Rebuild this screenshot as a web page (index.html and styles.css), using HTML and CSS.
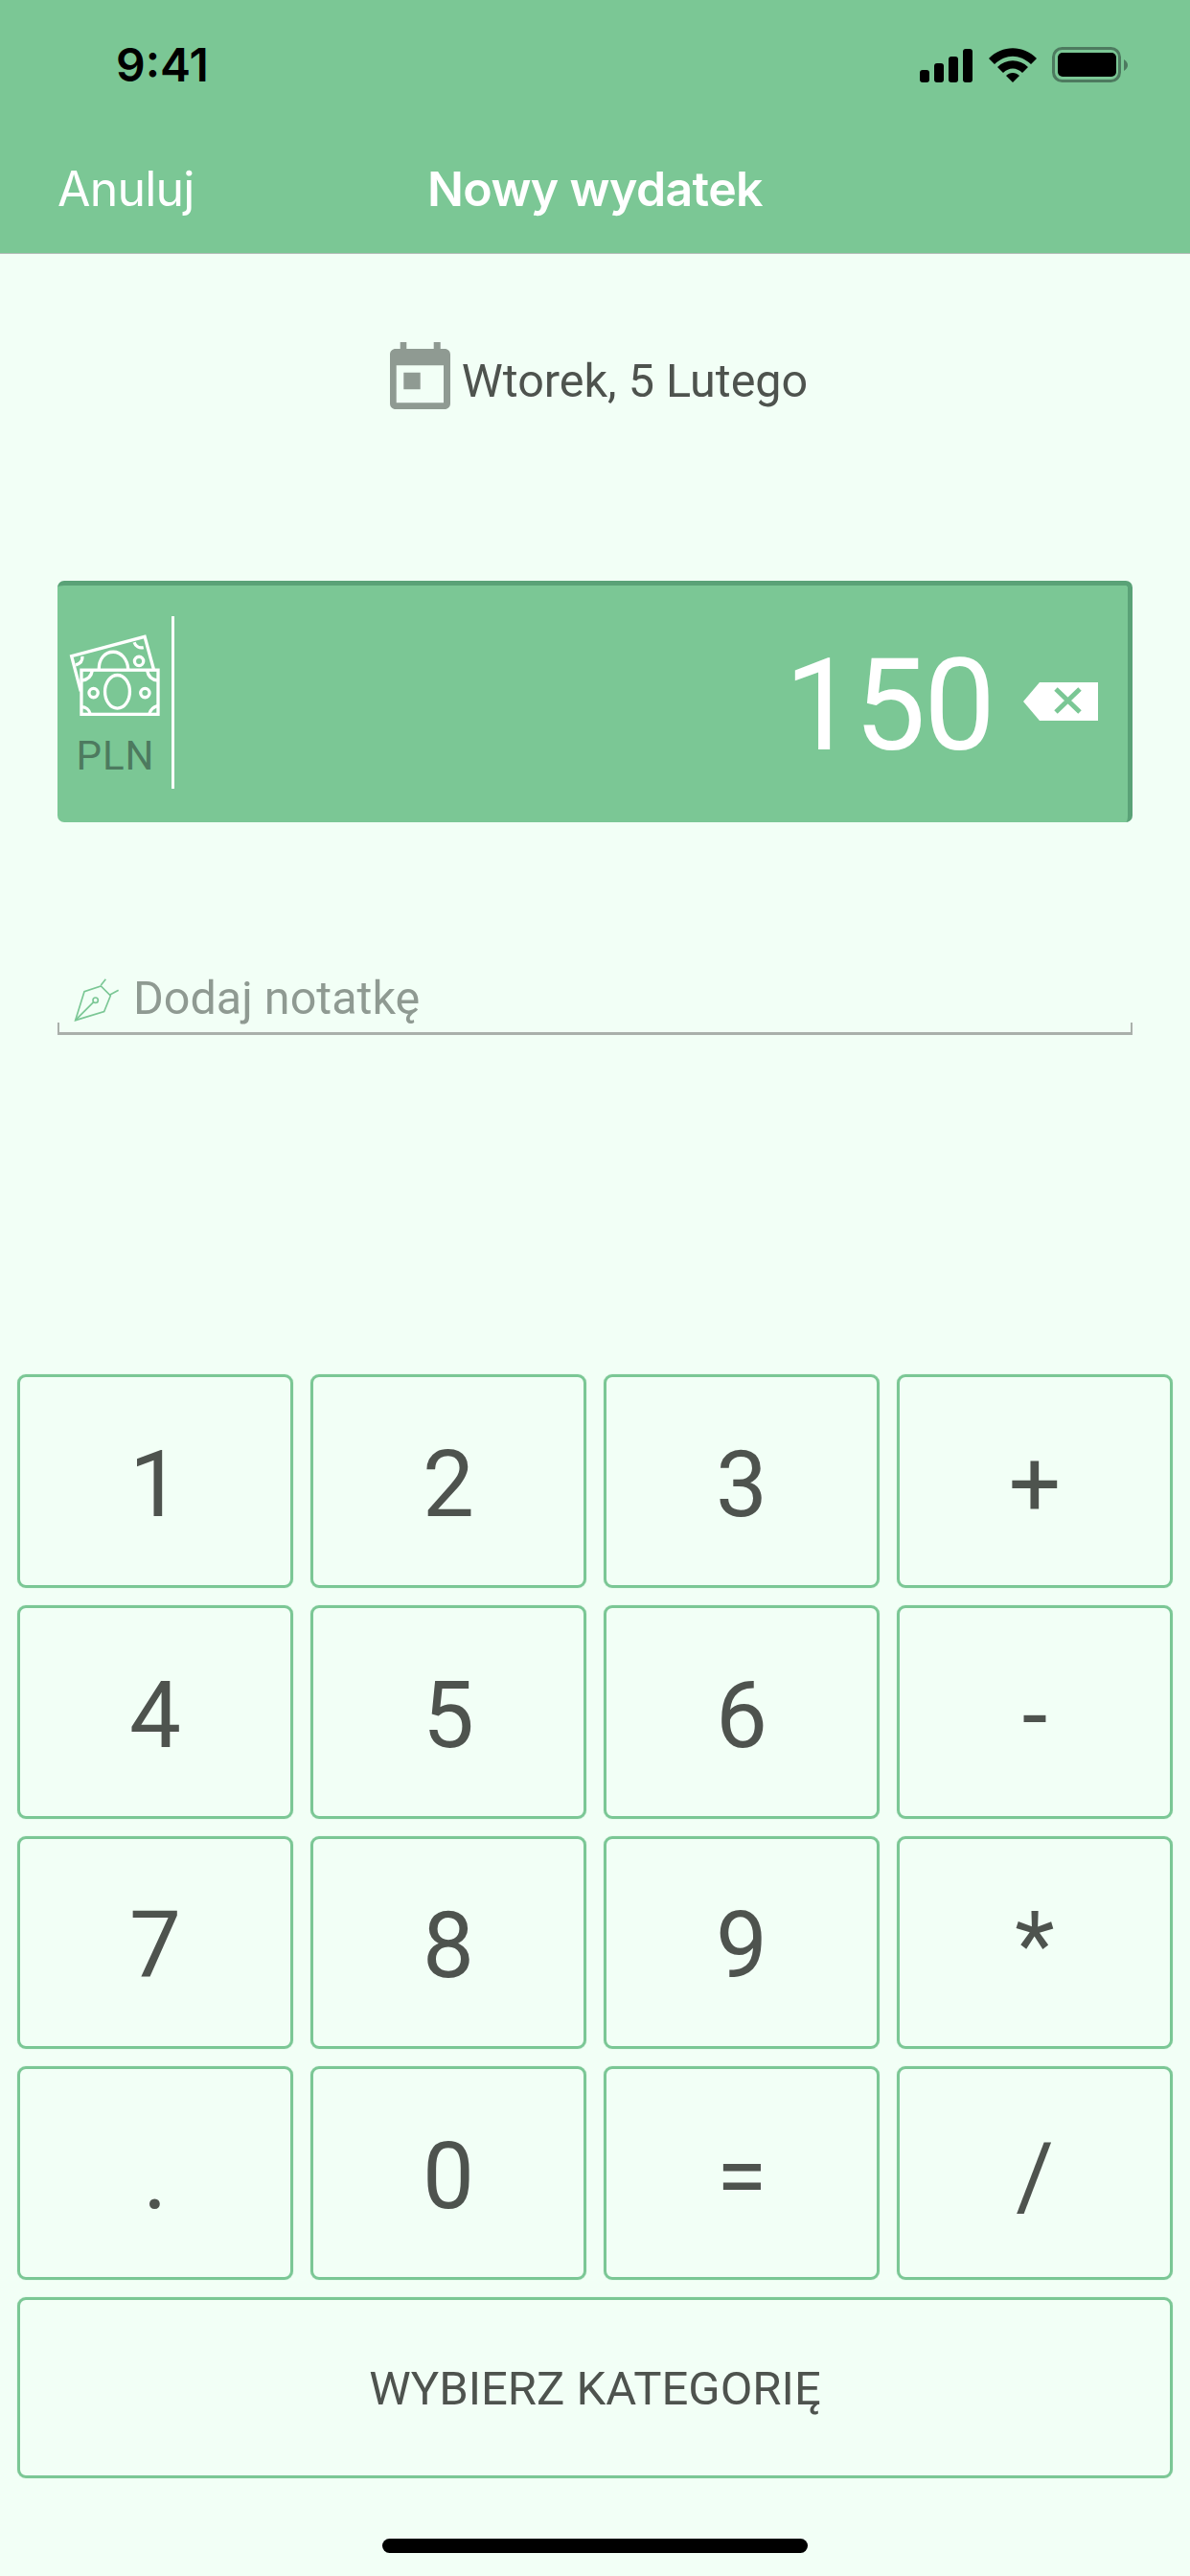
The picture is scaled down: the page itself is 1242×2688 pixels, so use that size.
FILE: index.html
```html
<!DOCTYPE html>
<html lang="pl">
<head>
<meta charset="utf-8">
<title>Nowy wydatek</title>
<link rel="stylesheet" href="styles.css">
</head>
<body>
<div class="app">
  <header class="header">
    <div class="status">
      <span class="clock">9:41</span>
      <div class="status-icons">
        <svg class="signal" width="55" height="35" viewBox="0 0 55 35"><rect x="0" y="22" width="10" height="13" rx="3"/><rect x="15" y="15" width="10" height="20" rx="3"/><rect x="30" y="8" width="10" height="27" rx="3"/><rect x="45" y="0" width="10" height="35" rx="3"/></svg>
        <svg class="wifi" width="50" height="36" viewBox="0 0 50 36"><path d="M0 11C14-3.500 36-3.500 50 11L44 17C32 6 18 6 6 17Z"/><path d="M9 20C18 11 32 11 41 20L35 26C29 20 21 20 15 26Z"/><path d="M18 29C22 25 28 25 32 29L25 36Z"/></svg>
        <svg class="battery" width="79" height="37" viewBox="0 0 79 37"><rect class="battery-shell" x="1.500" y="1.500" width="69" height="34" rx="9"/><rect x="6" y="6" width="61" height="25" rx="5"/><path class="battery-cap" d="M75 13C78 15 79 17 79 19C79 21 78 23 75 25Z"/></svg>
      </div>
    </div>
    <nav class="nav">
      <span class="nav-cancel">Anuluj</span>
      <span class="nav-title">Nowy wydatek</span>
      <span></span>
    </nav>
  </header>

  <main class="main">
    <div class="date">
      <svg class="calendar" width="63" height="70" viewBox="0 0 63 70"><path fill-rule="evenodd" d="M10.700 0H17.300V7H45.700V0H52.700V7H57C60.500 7 63 9.500 63 13V64C63 67.500 60.500 70 57 70H6C2.500 70 0 67.500 0 64V13C0 9.500 2.500 7 6 7H10.700ZM6.700 24.300V63.300H56V24.300ZM14.300 31.700H31.700V49.300H14.300Z"/></svg>
      <span class="date-text">Wtorek, 5 Lutego</span>
    </div>

    <section class="amount">
      <div class="currency">
        <svg class="money" width="98" height="88" viewBox="60 210 295 265">
          <path d="M100 392L71 281L301 220L329 322"/>
          <path d="M157 323C157 290 175 268 202 268C228 268 247 292 249 323"/>
          <circle cx="283" cy="297" r="14"/>
          <path d="M105 282C106 296 98 305 84 309"/>
          <path d="M268 238C272 250 284 257 297 254"/>
          <rect x="102" y="325" width="241" height="139"/>
          <ellipse cx="215" cy="393" rx="39" ry="52"/>
          <circle cx="140" cy="397" r="14"/>
          <circle cx="302" cy="397" r="14"/>
          <path d="M102 358C122 356 133 345 136 327"/>
          <path d="M309 327C312 345 325 356 343 358"/>
          <path d="M102 441C116 441 127 450 130 464"/>
          <path d="M315 464C318 450 328 441 343 437"/>
        </svg>
        <span class="currency-code">PLN</span>
      </div>
      <div class="divider"></div>
      <span class="amount-value">150</span>
      <svg class="backspace" width="78" height="40" viewBox="0 0 78 40"><path class="backspace-body" d="M17 0H78V40H17L0 20Z"/><path class="backspace-x" d="M34 7L59 31M59 7L34 31"/></svg>
    </section>

    <div class="note">
      <div class="note-row">
        <svg class="pen" width="48" height="48" viewBox="75 110 144 144"><path d="M80 247L108 157L160 140L190 170L170 220Z"/><path d="M80 247L137 190"/><circle cx="143" cy="184" r="8"/><path d="M160 137L175 118"/><path d="M187 168L215 153"/></svg>
        <span class="note-text">Dodaj notatkę</span>
      </div>
      <div class="note-line"></div>
    </div>

    <section class="keypad">
      <button class="key">1</button>
      <button class="key">2</button>
      <button class="key">3</button>
      <button class="key">+</button>
      <button class="key">4</button>
      <button class="key">5</button>
      <button class="key">6</button>
      <button class="key">-</button>
      <button class="key">7</button>
      <button class="key">8</button>
      <button class="key">9</button>
      <button class="key">*</button>
      <button class="key">.</button>
      <button class="key">0</button>
      <button class="key">=</button>
      <button class="key">/</button>
      <button class="key key-wide">WYBIERZ KATEGORIĘ</button>
    </section>
  </main>

  <div class="home-bar"></div>
</div>
</body>
</html>
```

FILE: styles.css
```css
* { box-sizing: border-box; }
html, body { margin: 0; padding: 0; }
body { background: #f2fff6; font-family: Roboto, "Liberation Sans", sans-serif; color: #4e534e; }
.app { width: 1242px; height: 2688px; display: flex; flex-direction: column; overflow: hidden; }

.header { height: 265px; background: #7bc795; border-bottom: 1px solid #b5bdb8; padding-top: 40px; }
.status { height: 54px; display: flex; align-items: center; justify-content: space-between; padding: 0 65px 0 121px; }
.clock { font-family: Inter, "Liberation Sans", sans-serif; font-weight: 600; font-size: 48px; color: #000; }
.status-icons { display: flex; align-items: flex-end; gap: 17px; }
.signal, .wifi { display: block; fill: #000; }
.battery { display: block; fill: #000; margin-left: -1px; }
.battery-shell { fill: none; stroke: #4d7a5f; stroke-width: 3; }
.battery-cap { fill: #4d7a5f; }
.nav { margin-top: 73px; height: 60px; padding: 0 60px; display: grid; grid-template-columns: 1fr auto 1fr; align-items: center; color: #fff; font-family: Inter, "Liberation Sans", sans-serif; font-size: 50px; }
.nav-cancel { font-weight: 400; letter-spacing: -0.8px; }
.nav-title { font-weight: 600; letter-spacing: -0.6px; }

.main { flex: 1; display: flex; flex-direction: column; }
.date { margin-top: 92px; padding-left: 8px; height: 70px; display: flex; align-items: center; justify-content: center; gap: 12px; font-size: 48.500px; }
.calendar { display: block; fill: #8f9a92; }
.date-text { margin-top: 11px; }

.amount { margin: 179px 60px 0; height: 252px; display: flex; align-items: center; background: #7bc795; border-top: 5px solid #5aa277; border-right: 5px solid #5aa277; border-radius: 7px; padding-right: 31px; }
.currency { width: 119px; padding-left: 2px; display: flex; flex-direction: column; align-items: center; margin-top: 4px; }
.money { display: block; margin-left: -2px; fill: none; stroke: #fff; stroke-width: 10; }
.currency-code { margin-top: 16px; font-size: 42px; line-height: 48px; letter-spacing: 1px; color: #4d7a5f; font-weight: 400; }
.divider { width: 3px; height: 180px; background: #fff; margin-top: -4px; }
.amount-value { margin-left: auto; font-size: 133px; font-weight: 400; color: #fff; line-height: 1; margin-top: 3px; margin-right: 31px; letter-spacing: -2px; }
.backspace { display: block; margin-top: -5px; }
.backspace-body { fill: #fff; }
.backspace-x { fill: none; stroke: #7bc795; stroke-width: 5; }

.note { margin: 161px 60px 0; }
.note-row { height: 48px; display: flex; align-items: center; gap: 14px; padding-left: 17px; font-size: 48.500px; color: #8f9a92; }
.pen { display: block; fill: none; stroke: #7bc795; stroke-width: 5; }
.note-text { margin-top: -4px; }
.note-line { height: 13px; border: solid #aab0ab; border-width: 0 2px 3px; }

.keypad { margin-top: auto; padding: 0 18px; display: grid; grid-template-columns: repeat(4, 288px); grid-template-rows: repeat(4, 222.750px) 189px; gap: 18px; }
.key { display: flex; align-items: center; justify-content: center; padding: 7px 0 0; background: transparent; border: 3px solid #7bc795; border-radius: 9px; box-shadow: 0 0 1px rgba(123, 199, 149, 0.8); font-family: Roboto, "Liberation Sans", sans-serif; font-size: 96px; color: #4e534e; }
.key-wide { grid-column: 1 / -1; font-size: 49px; padding-top: 2px; }

.home-bar { width: 444px; height: 15px; margin: 63px auto 24px; border-radius: 8px; background: #000; }
```
